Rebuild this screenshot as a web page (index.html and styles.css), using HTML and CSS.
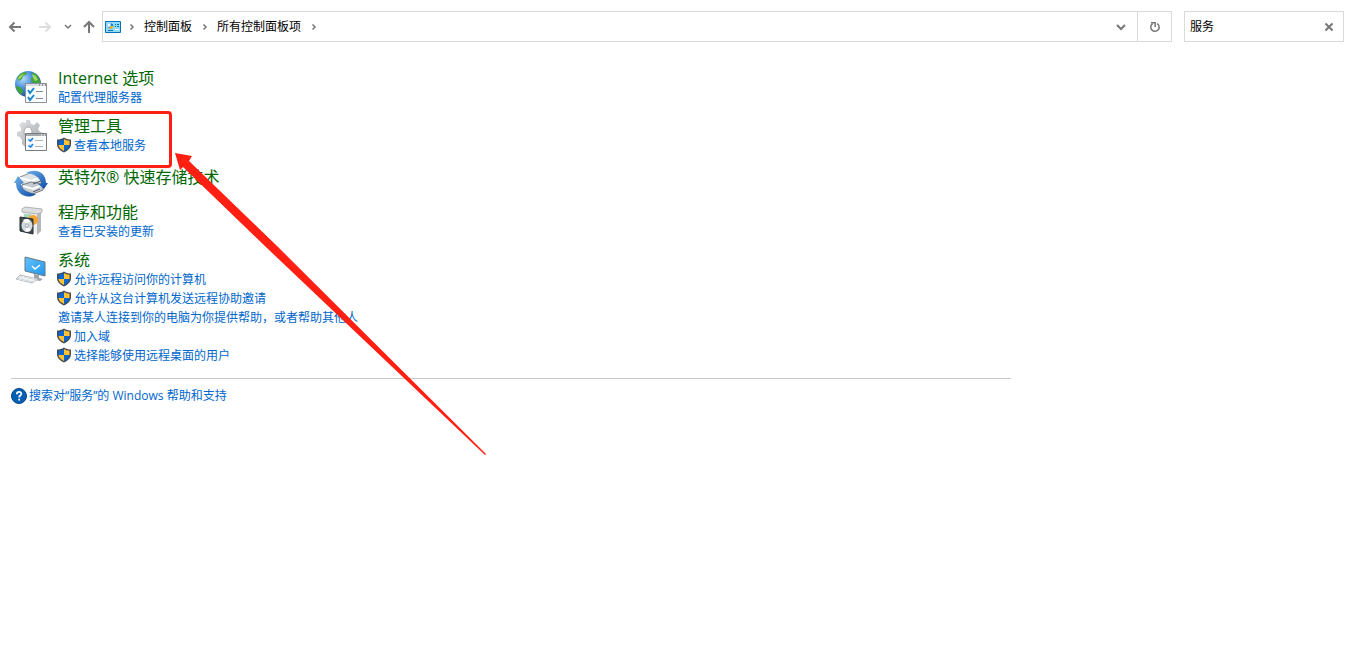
FILE: index.html
```html
<!DOCTYPE html>
<html lang="zh-CN">
<head>
<meta charset="utf-8">
<title>所有控制面板项</title>
<link rel="stylesheet" href="styles.css">
</head>
<body>
<svg class="defs" aria-hidden="true">
  <defs>
    <radialGradient id="sea" cx=".3" cy=".3" r=".8"><stop offset="0" stop-color="#b4dcf8"/><stop offset=".5" stop-color="#3f86dc"/><stop offset="1" stop-color="#173c94"/></radialGradient>
    <linearGradient id="metal" x1="0" y1="0" x2="1" y2="1"><stop offset="0" stop-color="#e2e4e6"/><stop offset="1" stop-color="#9fa3a7"/></linearGradient>
    <linearGradient id="screen" x1="0" y1="0" x2="1" y2="1"><stop offset="0" stop-color="#63c2fb"/><stop offset="1" stop-color="#2196ea"/></linearGradient>
    <linearGradient id="swirl" x1="0" y1="0" x2="1" y2="1"><stop offset="0" stop-color="#6fb2ec"/><stop offset="1" stop-color="#0b4ba5"/></linearGradient>
    <symbol id="shield" viewBox="0 0 14 16">
      <path d="M7 .5C5 2 2.500 2.600 0 2.600V7c0 4 3 6.500 7 8.500 4-2 7-4.500 7-8.500V2.600C11.500 2.600 9 2 7 .5z" fill="#454b52"/>
      <path d="M7 2C5.500 3 3.500 3.700 1.500 3.800V8H7z" fill="#0b66d0"/>
      <path d="M7 2c1.500 1 3.500 1.700 5.500 1.800V8H7z" fill="#ffc233"/>
      <path d="M1.500 8H7v6C4 12.500 1.800 10.800 1.500 8z" fill="#ffc233"/>
      <path d="M12.500 8H7v6c3-1.500 5.200-3.200 5.500-6z" fill="#0b66d0"/>
    </symbol>
    <symbol id="chevron" viewBox="0 0 6 8"><path d="M1.500 1.500 4 4 1.500 6.500" fill="none" stroke="#777" stroke-width="1.500"/></symbol>
  </defs>
</svg>

<header class="toolbar">
  <nav class="history" aria-label="导航">
    <button class="tool back" aria-label="后退"><svg width="14" height="14" viewBox="0 0 14 14"><path d="M13 7H2M6.500 2.500 2 7l4.500 4.500"/></svg></button>
    <button class="tool forward" aria-label="前进" disabled><svg width="14" height="14" viewBox="0 0 14 14"><path d="M1 7h11M7.500 2.500 12 7l-4.500 4.500"/></svg></button>
    <button class="tool recent" aria-label="最近"><svg width="8" height="8" viewBox="0 0 8 8"><path d="M1 2l3 3 3-3"/></svg></button>
    <button class="tool up" aria-label="向上"><svg width="14" height="14" viewBox="0 0 14 14"><path d="M7 13V2M2 7l5-5 5 5"/></svg></button>
  </nav>
  <div class="address">
    <svg class="panel-icon" width="16" height="12" viewBox="0 0 16 12">
      <path d="M.5.5h15v11H.5z" fill="#8fdcff" stroke="#0870b4"/>
      <circle cx="5.500" cy="5" r="2.800" fill="#1683d8"/><path d="M5.500 5V2.200A2.800 2.800 0 0 0 3 6.500z" fill="#fff"/><path d="M5.500 5h2.800A2.800 2.800 0 0 1 4 7.500z" fill="#f9b52c"/>
      <path d="M10 3.500h1M12 3.500h2M10 5.500h1M12 5.500h2M3 9.500h5" stroke="#086db4"/><path d="M10 8.500h4" stroke="#fff"/>
    </svg>
    <svg class="chev" width="6" height="8"><use href="#chevron"/></svg>
    <a class="crumb" href="#">控制面板</a>
    <svg class="chev" width="6" height="8"><use href="#chevron"/></svg>
    <a class="crumb" href="#">所有控制面板项</a>
    <svg class="chev" width="6" height="8"><use href="#chevron"/></svg>
    <button class="tool drop" aria-label="以前的位置"><svg width="10" height="8" viewBox="0 0 10 8"><path d="M1 2l4 4 4-4"/></svg></button>
    <button class="tool refresh" aria-label="刷新"><svg width="12" height="12" viewBox="0 0 12 12"><path d="M8.200 2.600A4.200 4.200 0 1 1 3.600 2.700"/><path d="M2 1.800h4.200V6"/></svg></button>
  </div>
  <form class="search">
    <input type="text" value="服务" aria-label="搜索控制面板">
    <button class="tool clear" type="button" aria-label="清除"><svg width="10" height="10" viewBox="0 0 10 10"><path d="M1.500 1.500l7 7M8.500 1.500l-7 7"/></svg></button>
  </form>
</header>

<main class="results">
  <section class="item">
    <svg class="icon" width="34" height="34" viewBox="0 0 34 34">
      <circle cx="14" cy="14" r="13" fill="url(#sea)"/>
      <path d="M3 8C5 4 8 2 12 2l1 2-4 2-1 3-3 2zM17 2l5 2 3 4 1.500 5-1.500 4-3 0-2-4-3-2 0-3 3-2zM2 16l4 1 3 3-1 5C5 23 2 20 2 16z" fill="#43a336"/>
      <path d="M4 8c2-3 4-4 7-4.500L9 5 7 8 5 10zM18 4l4 2 2 4-3 1-2-3z" fill="#9dd46b"/>
      <path d="M11.500 13.500h21v19h-21z" fill="#fbfcfd" stroke="#8b9196"/>
      <path d="M12 14h20v2H12z" fill="#d8dce0"/><path d="M25 15h1M28 15h1M31 15h1" stroke="#555"/>
      <path d="M14 20l2 3 4-5M14 27l2 3 4-5" fill="none" stroke="#1587cf" stroke-width="2"/><path d="M22 21.500h7M22 28.500h7" stroke="#858b90"/>
    </svg>
    <div class="text"><h2><a href="#">Internet 选项</a></h2><a class="task" href="#">配置代理服务器</a></div>
  </section>

  <section class="item marked">
    <svg class="icon" width="34" height="34" viewBox="0 -1 34 34">
      <path d="M12 1h4l1 4 3 1 3-3 3 3-2 4 2 3 3 1v4l-4 2-2 4 1 3-3 2-4-3-4 0-2 2-3-3v-4l-2-3-3-1 0-4 4-1 0-3-2-3 3-3 4 1z" fill="url(#metal)"/>
      <ellipse cx="14" cy="13" rx="4" ry="5" fill="#fff" stroke="#a7abaf"/>
      <path d="M11.500 14.500h21v17h-21z" fill="#fbfcfd" stroke="#777c80"/>
      <path d="M12 15h20v2H12z" fill="#a5a9ac"/><path d="M27 16h1M30 16h1" stroke="#fff"/>
      <path d="M14 19h5v4h-5zM14 25h5v4h-5z" fill="#dceafa"/><path d="M14.500 20.500l2 1.500 2.500-3M14.500 26.500l2 1.500 2.500-3" fill="none" stroke="#1b81e3" stroke-width="1.500"/><path d="M21 21.500h8M21 27.500h8" stroke="#b0b3b6"/>
    </svg>
    <div class="text"><h2><a href="#">管理工具</a></h2><a class="task" href="#"><svg class="shield" width="14" height="16"><use href="#shield"/></svg>查看本地服务</a></div>
  </section>

  <section class="item compact">
    <svg class="icon" width="34" height="28" viewBox="0 0 34 28">
      <path d="M6 8l10-4 13 3v7l-11 4L6 14z" fill="#dfe3e7" stroke="#878d94"/><path d="M6 9l12 3 11-5" fill="none" stroke="#fff" stroke-width="2"/>
      <path d="M8 16l9-3 12 2v6l-10 4-11-4z" fill="#c6cbd0" stroke="#747b82"/><path d="M9 17l10 3 9-4" fill="none" stroke="#fff" stroke-width="2"/><path d="M19 23l7-3M19 15l8-3" stroke="#555d65"/>
      <path d="M12 4C20-1 32 2 32 14h2l-4 6-6-5h3C27 9 21 5 12 4z" fill="url(#swirl)"/>
      <path d="M22 25C14 31 2 26 2 14H0l4-7 6 7H7c0 6 6 10 15 11z" fill="url(#swirl)"/>
    </svg>
    <div class="text"><h2><a href="#">英特尔® 快速存储技术</a></h2></div>
  </section>

  <section class="item">
    <svg class="icon" width="34" height="34" viewBox="0 -1 34 34">
      <path d="M9 6l15 2v20L9 26z" fill="#f0f0ef"/><path d="M23 8l4-2v20l-4 4z" fill="#b4b7b9"/><path d="M8 4l3-2 17 2v3l-4 2L8 7z" fill="#dddedf" stroke="#b0b2b4"/>
      <path d="M10 9h7v6h-7z" fill="#acd6ba"/><circle cx="19" cy="15" r="5" fill="#f6a630"/>
      <path d="M6 12l13 2v15L6 26z" fill="#424c51" stroke="#242d32"/>
      <ellipse cx="13" cy="20.500" rx="5.500" ry="6.500" fill="#d3dbdf"/><path d="M13 20l-4-5c3-2 6-1 7 1zM13 21l4 4c-2 2-4 2-6 1z" fill="#fff"/><ellipse cx="13" cy="20.500" rx="2" ry="2.500" fill="#a5afb5"/><circle cx="13" cy="20.500" r="1" fill="#fff"/>
    </svg>
    <div class="text"><h2><a href="#">程序和功能</a></h2><a class="task" href="#">查看已安装的更新</a></div>
  </section>

  <section class="item">
    <svg class="icon" width="34" height="34" viewBox="0 0 34 34">
      <path d="M11 5l20 5v14l-20-5z" fill="url(#screen)" stroke="#657782"/><path d="M18 14l3 3 5-4" fill="none" stroke="#fff" stroke-width="1.500"/>
      <path d="M20 22l5 1v3l4 1-3 2-10-2 4-1z" fill="#9ba4a9"/>
      <path d="M6 23l18 4-6 4-16-4z" fill="#d9dddf" stroke="#b9bec1"/><path d="M5 25l16 4M10 24l-5 4M15 25l-6 4M20 26l-6 4" stroke="#f3f5f6"/>
    </svg>
    <div class="text">
      <h2><a href="#">系统</a></h2>
      <a class="task" href="#"><svg class="shield" width="14" height="16"><use href="#shield"/></svg>允许远程访问你的计算机</a>
      <a class="task" href="#"><svg class="shield" width="14" height="16"><use href="#shield"/></svg>允许从这台计算机发送远程协助邀请</a>
      <a class="task" href="#">邀请某人连接到你的电脑为你提供帮助，或者帮助其他人</a>
      <a class="task" href="#"><svg class="shield" width="14" height="16"><use href="#shield"/></svg>加入域</a>
      <a class="task" href="#"><svg class="shield" width="14" height="16"><use href="#shield"/></svg>选择能够使用远程桌面的用户</a>
    </div>
  </section>
</main>

<footer class="help">
  <a href="#"><svg width="16" height="16" viewBox="0 0 16 16"><circle cx="8" cy="8" r="7.500" fill="#0560b5" stroke="#064582"/><path d="M5.800 6.300C5.800 3 10.500 3.200 10.300 6c-.1 1.500-2.200 1.600-2.200 3.500M8.100 10.800v1.700" fill="none" stroke="#fff" stroke-width="1.700"/></svg>搜索对“服务”的 Windows 帮助和支持</a>
</footer>

<svg class="arrow" width="320" height="310" viewBox="0 0 320 310" aria-hidden="true"><path d="M5 3L22 6L19 11L107 96L316 304L315 305L98 99L13 17L10 20Z"/></svg>
</body>
</html>
```
FILE: styles.css
```css
*, *::after { box-sizing: border-box; }

body {
  position: relative;
  min-height: 100vh;
  margin: 0;
  background: #fff;
  color: #000;
  font: 12px/19px "Open Sans", "Noto Sans CJK SC", sans-serif;
}

a { color: inherit; text-decoration: none; }
.defs { position: absolute; width: 0; height: 0; }

.toolbar {
  display: flex;
  align-items: center;
  padding: 11px 8px 0;
}

.history {
  display: flex;
  align-items: center;
  flex: none;
  width: 94px;
}

.tool {
  display: flex;
  align-items: center;
  justify-content: center;
  padding: 0;
  border: 0;
  background: none;
}
.tool path { fill: none; stroke: #777; stroke-width: 2; }
.forward { margin-left: 16px; }
.forward path { stroke: #dedede; }
.recent { margin-left: 12px; }
.recent path { stroke-width: 1.5; }
.up { margin-left: 10px; }

.address {
  display: flex;
  align-items: center;
  flex: 1;
  height: 31px;
  padding-left: 2px;
  border: 1px solid #d9d9d9;
}
.chev { margin: 0 9px 0 10px; }
.panel-icon + .chev { margin-left: 8px; }
.crumb { white-space: nowrap; }
.drop { width: 32px; height: 29px; margin-left: auto; }
.refresh { width: 34px; height: 29px; border-left: 1px solid #d9d9d9; }
.refresh path { stroke-width: 1.5; }

.search {
  display: flex;
  flex: none;
  width: 160px;
  height: 31px;
  margin-left: 12px;
  border: 1px solid #d9d9d9;
}
.search input {
  flex: 1;
  min-width: 0;
  padding: 0 5px;
  border: 0;
  outline: 0;
  background: none;
  font: inherit;
}
.clear { width: 28px; }

.results {
  display: flex;
  flex-direction: column;
  gap: 10px;
  padding: 27px 14px 13px;
}
.item {
  display: flex;
  gap: 10px;
  min-height: 38px;
  position: relative;
}
.icon { flex: none; margin-top: 1px; }
.compact { height: 28px; min-height: 28px; }
.compact .icon { margin-top: 4px; }
.compact .text { padding-top: 3px; }

.item h2 {
  margin: 0;
  color: #006600;
  font-size: 16px;
  font-weight: 400;
  line-height: 19px;
}
.task {
  display: flex;
  width: max-content;
  height: 19px;
  color: #0066cc;
}
.shield { margin: 1px 3px 0 -1px; }

.marked::after {
  content: "";
  position: absolute;
  top: -6px;
  left: -9px;
  width: 167px;
  height: 57px;
  border: 3px solid #ff2013;
  border-radius: 4px;
  pointer-events: none;
}

.help {
  max-width: 1000px;
  margin-left: 11px;
  padding-top: 7px;
  border-top: 1px solid #c8c8c8;
  color: #0066cc;
}
.help a { display: flex; align-items: center; gap: 2px; width: max-content; }

.arrow {
  position: absolute;
  top: 150px;
  left: 170px;
  pointer-events: none;
}
.arrow path { fill: #ff2013; }
```
